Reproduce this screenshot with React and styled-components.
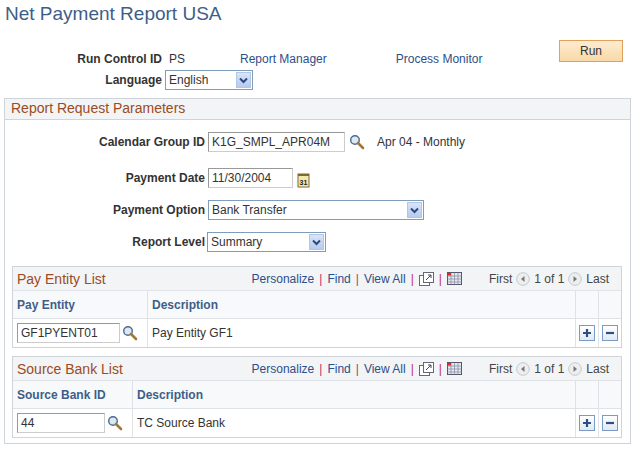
import React from "react";
import styled, { createGlobalStyle } from "styled-components";

const Global = createGlobalStyle`
  body { margin: 0; font-family: Arial, "Liberation Sans", sans-serif; font-size: 12px; color: #333; background: #fff; }
`;

const Page = styled.div`width: 638px; height: 452px; position: relative; overflow: hidden;`;
const Title = styled.h1`margin: 0; padding: 3px 0 0 5px; height: 30px; box-sizing: border-box; font-weight: normal; font-size: 19px; color: #3e5e8a;`;

const Top = styled.div`display: flex; padding-top: 22px;`;
const TopForm = styled.div`display: grid; grid-template-columns: 162px auto; row-gap: 4px; align-items: center; column-gap: 3px;`;
const Label = styled.div`font-weight: bold; text-align: right; color: #333; font-size: 12px;`;
const Value = styled.div`display: flex; align-items: center;`;
const Link = styled.span`color: #2d4f8a; margin-left: ${p => p.$ml || 0}px;`;
const RunBtn = styled.button`
  margin-left: auto; margin-right: 15px; margin-top: -12px; width: 64px; height: 22px;
  background: linear-gradient(#fdecd1, #f9d9a8); border: 1px solid #e2a15b; font: 12px Arial, "Liberation Sans", sans-serif; color: #333;
`;
const Select = styled.div`
  width: ${p => p.$w}px; height: 20px; box-sizing: border-box; border: 1px solid #7f9db9;
  display: flex; align-items: center; padding-left: 3px; font-size: 12px; background: #fff;
`;
const Arrow = styled.div`
  margin-left: auto; width: 15px; height: 16px; margin-right: 1px;
  background: linear-gradient(#d8e4f8, #b7cbef); border: 1px solid #b4c6e6; box-sizing: border-box;
  display: flex; align-items: center; justify-content: center;
`;
const Input = styled.div`
  width: ${p => p.$w}px; height: 20px; box-sizing: border-box; border: 1px solid #aaa; border-color: #999 #ccc #ccc #999;
  display: flex; align-items: center; padding-left: 3px; background: #fff; font-size: 12px;
`;

const Section = styled.div`margin: 8px 7px 0 4px; border: 1px solid #cfd4da; height: 346px; box-sizing: border-box;`;
const SectionHead = styled.div`height: 20px; background: #f2f4f6; border-bottom: 1px solid #cfd4da; color: #9c4b22; font-size: 14px; padding-left: 6px; line-height: 19px;`;
const Form = styled.div`display: grid; grid-template-columns: 200px auto; column-gap: 3px; align-items: center; padding-top: 11px;`;
const FRow = styled.div`display: contents;`;
const Cell = styled.div`height: ${p => p.$h}px; display: flex; align-items: center; gap: 4px;`;

const Grid = styled.div`margin: ${p => p.$mt}px 8px 0 7px; border: 1px solid #cfd4da;`;
const GridHead = styled.div`height: 23px; background: #f2f4f6; display: flex; align-items: center; padding: 0 12px 0 4px; font-size: 12px;`;
const GridTitle = styled.span`color: #9c4b22; font-size: 14px;`;
const Nav = styled.div`margin-left: auto; display: flex; align-items: center; color: #2d4f8a;`;
const Sep = styled.span`color: #c0306a; margin: 0 5px;`;
const Pager = styled.div`display: flex; align-items: center; gap: 4px; margin-left: 27px; color: #444;`;
const Row = styled.div`display: grid; grid-template-columns: ${p => p.$cols}; height: ${p => p.$h}px; border-top: 1px solid #dfe3e8;`;
const HCell = styled.div`display: flex; align-items: center; padding-left: 4px; font-weight: bold; color: #3e5e8a; background: #f8f9fa; border-left: ${p => p.$first ? "none" : "1px solid #dfe3e8"};`;
const DCell = styled.div`display: flex; align-items: center; padding-left: ${p => p.$center ? 0 : 4}px; gap: 2px; border-left: ${p => p.$first ? "none" : "1px solid #dfe3e8"}; justify-content: ${p => p.$center ? "center" : "flex-start"};`;
const SqBtn = styled.div`width: 16px; height: 16px; box-sizing: border-box; border: 1px solid #7a9bc4; background: linear-gradient(#fff, #e1e9f4); display: flex; align-items: center; justify-content: center;`;
const Note = styled.span`margin-left: ${p => p.$ml}px;`;

const Chev = () => (<svg width="9" height="7" viewBox="0 0 9 7"><path d="M1 1.5 L4.5 5 L8 1.5" fill="none" stroke="#2c4a7c" strokeWidth="2" /></svg>);
const Lens = () => (
  <svg width="16" height="16" viewBox="0 0 16 16"><circle cx="6" cy="6" r="4.3" fill="#dbe9f7" stroke="#4d6a8c" strokeWidth="1.4" /><path d="M9 9 L14 14" stroke="#a07838" strokeWidth="2.6" strokeLinecap="round" /></svg>
);
const Cal = () => (
  <svg width="13" height="16" viewBox="0 0 13 16"><rect x="1" y="2" width="11" height="13" fill="#f4e6b0" stroke="#7d6a30" /><rect x="1" y="2" width="11" height="2" fill="#7d6a30" /><text x="2.5" y="12.5" fontSize="7" fontFamily="Arial" fontWeight="bold" fill="#222">31</text></svg>
);
const Zoom = () => (
  <svg width="15" height="14" viewBox="0 0 15 14"><rect x="0.5" y="3.5" width="10" height="10" fill="#fff" stroke="#667" /><rect x="4.5" y="0.5" width="10" height="10" fill="#fff" stroke="#667" /><path d="M7 8 L12 3 M9 3 H12 V6" stroke="#445" fill="none" /></svg>
);
const Sheet = () => (
  <svg width="15" height="13" viewBox="0 0 15 13"><rect x="0.5" y="0.5" width="14" height="12" fill="#dfe8f3" stroke="#556" /><path d="M0.5 4 H14.5 M0.5 7 H14.5 M0.5 10 H14.5 M4 .5 V12.5 M7.5 .5 V12.5 M11 .5 V12.5" stroke="#889" strokeWidth="0.7" /><rect x="1" y="1" width="3" height="2.5" fill="#e22" /></svg>
);
const Circ = ({ dir }) => (
  <svg width="14" height="14" viewBox="0 0 14 14"><circle cx="7" cy="7" r="6.3" fill="#eceef0" stroke="#c4c8cc" /><path d={dir === "l" ? "M8.5 4 L5 7 L8.5 10Z" : "M5.5 4 L9 7 L5.5 10Z"} fill="#777" /></svg>
);
const Plus = () => (<SqBtn><svg width="10" height="10"><path d="M5 1 V9 M1 5 H9" stroke="#2c4f86" strokeWidth="2.2" /></svg></SqBtn>);
const Minus = () => (<SqBtn><svg width="10" height="10"><path d="M1 5 H9" stroke="#2c4f86" strokeWidth="2.2" /></svg></SqBtn>);

const ListGrid = ({ mt, title, col1, c1w, value, inW, desc }) => {
  const cols = `${c1w}px 1fr 23px 23px`;
  return (
    <Grid $mt={mt}>
      <GridHead>
        <GridTitle>{title}</GridTitle>
        <Nav>
          Personalize<Sep>|</Sep>Find<Sep>|</Sep>View All<Sep>|</Sep><Zoom /><Sep>|</Sep><Sheet />
          <Pager>First <Circ dir="l" /> 1 of 1 <Circ dir="r" /> Last</Pager>
        </Nav>
      </GridHead>
      <Row $cols={cols} $h={27}>
        <HCell $first>{col1}</HCell><HCell>Description</HCell><HCell /><HCell />
      </Row>
      <Row $cols={cols} $h={28}>
        <DCell $first><Input $w={inW}>{value}</Input><Lens /></DCell>
        <DCell>{desc}</DCell>
        <DCell $center><Plus /></DCell>
        <DCell $center><Minus /></DCell>
      </Row>
    </Grid>
  );
};

export default function App() {
  return (
    <Page>
      <Global />
      <Title>Net Payment Report USA</Title>
      <Top>
        <TopForm>
          <Label>Run Control ID</Label>
          <Value><Note $ml={4}>PS</Note><Link $ml={55}>Report Manager</Link><Link $ml={69}>Process Monitor</Link></Value>
          <Label>Language</Label>
          <Value><Select $w={88}>English<Arrow><Chev /></Arrow></Select></Value>
        </TopForm>
        <RunBtn>Run</RunBtn>
      </Top>
      <Section>
        <SectionHead>Report Request Parameters</SectionHead>
        <Form>
          <FRow><Label>Calendar Group ID</Label><Cell $h={22}><Input $w={137}>K1G_SMPL_APR04M</Input><Lens /><Note $ml={8}>Apr 04 - Monthly</Note></Cell></FRow>
          <FRow><Label style={{ paddingTop: 13 }}>Payment Date</Label><Cell $h={35} style={{ alignItems: "flex-end", paddingBottom: 2 }}><Input $w={85}>11/30/2004</Input><Cal /></Cell></FRow>
          <FRow><Label style={{ paddingTop: 10 }}>Payment Option</Label><Cell $h={30} style={{ alignItems: "flex-end" }}><Select $w={216}>Bank Transfer<Arrow><Chev /></Arrow></Select></Cell></FRow>
          <FRow><Label style={{ paddingTop: 12 }}>Report Level</Label><Cell $h={32} style={{ alignItems: "flex-end", marginLeft: -1 }}><Select $w={119}>Summary<Arrow><Chev /></Arrow></Select></Cell></FRow>
        </Form>
        <ListGrid mt={14} title="Pay Entity List" col1="Pay Entity" c1w={134} value="GF1PYENT01" inW={103} desc="Pay Entity GF1" />
        <ListGrid mt={8} title="Source Bank List" col1="Source Bank ID" c1w={119} value="44" inW={88} desc="TC Source Bank" />
      </Section>
    </Page>
  );
}
